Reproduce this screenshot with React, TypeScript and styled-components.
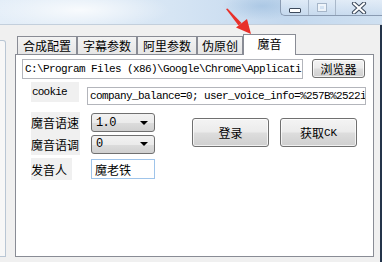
import React from "react";
import styled, { createGlobalStyle } from "styled-components";

const GlobalStyle = createGlobalStyle`
  html, body {
    margin: 0;
    padding: 0;
    background: #f0f0f0;
  }
`;

const CJK = `"Noto Sans CJK SC", "Liberation Sans", sans-serif`;
const MONO = `"Liberation Mono", "Noto Sans CJK SC", monospace`;

const Root = styled.div`
  width: 382px;
  height: 262px;
  position: relative;
  overflow: hidden;
  display: flex;
  flex-direction: column;
  background: #f0f0f0;
  font-family: ${CJK};
  font-size: 12px;
  color: #000;
`;

const TitleBar = styled.div`
  height: 24px;
  display: flex;
  justify-content: flex-end;
  align-items: flex-start;
  background:
    radial-gradient(ellipse 40px 14px at 262px 6px, rgba(150, 185, 220, 0.55), rgba(150, 185, 220, 0)),
    radial-gradient(ellipse 90px 20px at 80px 10px, rgba(255, 255, 255, 0.8), rgba(255, 255, 255, 0)),
    linear-gradient(to right, #e4eef8 0%, #d6e5f4 45%, #c3d8ee 75%, #cfe0f1 100%);
`;

const Controls = styled.div`
  display: flex;
  height: 15px;
  border-left: 1px solid #8a9bb2;
  border-bottom: 1px solid #8a9bb2;
  border-bottom-left-radius: 5px;
  background: linear-gradient(to bottom, rgba(235, 242, 250, 0.7), rgba(200, 218, 238, 0.6));
`;

const CtrlButton = styled.div<{ $w: number; $last?: boolean }>`
  width: ${({ $w }) => $w}px;
  display: flex;
  align-items: center;
  justify-content: center;
  border-right: ${({ $last }) => ($last ? "none" : "1px solid #a9b8ca")};
`;

const MinIcon = styled.div`
  width: 10px;
  height: 3px;
  margin-top: 5px;
  background: #fff;
  border: 1px solid #3d4a5c;
  border-radius: 1px;
`;

const MaxIcon = styled.div`
  width: 8px;
  height: 7px;
  border: 1px solid #a6b6c9;
  box-shadow: inset 0 0 0 2px rgba(255, 255, 255, 0.6);
`;

const Body = styled.div`
  flex: 1;
  display: flex;
  border-top: 1px solid #c3cfdc;
`;

const LeftStub = styled.div`
  width: 5px;
  margin-top: 15px;
  margin-bottom: 5px;
  background: #f7f7f7;
  border-right: 1px solid #b9c6d4;
  border-bottom: 1px solid #b9c6d4;
  border-top: 1px solid #b9c6d4;
  border-top-right-radius: 3px;
`;

const TabArea = styled.div`
  margin-left: 9px;
  margin-top: 9px;
  width: 359px;
  height: 223px;
  display: flex;
  flex-direction: column;
`;

const TabRow = styled.div`
  display: flex;
  align-items: flex-start;
  height: 21px;
  margin-bottom: -1px;
  padding-left: 2px;
  position: relative;
  z-index: 1;
`;

const Tab = styled.div<{ $w: number; $active?: boolean }>`
  box-sizing: border-box;
  width: ${({ $w }) => $w}px;
  height: ${({ $active }) => ($active ? 21 : 19)}px;
  margin-top: ${({ $active }) => ($active ? 0 : 2)}px;
  border: 1px solid #898c95;
  border-bottom: ${({ $active }) => ($active ? "none" : "1px solid #898c95")};
  background: ${({ $active }) =>
    $active ? "#fff" : "linear-gradient(to bottom, #f3f3f3, #e6e6e6)"};
  display: flex;
  justify-content: center;
  align-items: ${({ $active }) => ($active ? "flex-start" : "center")};
  padding-top: ${({ $active }) => ($active ? 2 : 0)}px;
  line-height: 14px;
  font-size: 12px;
  white-space: nowrap;
`;

const Panel = styled.div`
  flex: 1;
  background: #fff;
  border: 1px solid #898c95;
  padding: 4px 6px;
  display: flex;
  flex-direction: column;
`;

const PathRow = styled.div`
  display: flex;
  align-items: flex-start;
`;

const TextBox = styled.div<{ $w: number; $h: number; $focus?: boolean; $mono?: boolean }>`
  box-sizing: border-box;
  width: ${({ $w }) => $w}px;
  height: ${({ $h }) => $h}px;
  border: 1px solid ${({ $focus }) => ($focus ? "#9fc4ea" : "#b3b5bb")};
  background: #fff;
  padding-left: ${({ $mono }) => ($mono ? 2 : 3)}px;
  display: flex;
  align-items: center;
  white-space: nowrap;
  overflow: hidden;
  font-family: ${({ $mono }) => ($mono ? MONO : CJK)};
  font-size: ${({ $mono }) => ($mono ? 11 : 12)}px;
  letter-spacing: ${({ $mono }) => ($mono ? "-0.6px" : "0")};
`;

const WinButton = styled.div<{ $w: number; $h: number }>`
  box-sizing: border-box;
  width: ${({ $w }) => $w}px;
  height: ${({ $h }) => $h}px;
  border: 1px solid #707070;
  border-radius: 3px;
  background: linear-gradient(to bottom, #f4f4f4 0%, #ebebeb 48%, #dddddd 52%, #cfcfcf 100%);
  box-shadow: inset 0 0 0 1px rgba(255, 255, 255, 0.7);
  display: flex;
  align-items: center;
  justify-content: center;
  font-size: 12px;
  white-space: nowrap;
`;

const BrowseButton = styled(WinButton)`
  margin-left: 9px;
`;

const Form = styled.div`
  margin-top: 3px;
  padding-left: 9px;
  display: flex;
  flex-direction: column;
`;

const CookieRow = styled.div`
  display: flex;
  align-items: flex-start;
`;

const CookieLabel = styled.div`
  width: 48px;
  height: 20px;
  background: #f0f0f0;
  display: flex;
  align-items: center;
  padding-left: 1px;
  box-sizing: border-box;
  font-family: ${MONO};
  font-size: 11px;
  letter-spacing: -0.8px;
`;

const CookieBox = styled(TextBox)`
  margin-left: 8px;
  margin-top: 5px;
`;

const Lower = styled.div`
  display: flex;
  margin-top: 7px;
`;

const FieldCol = styled.div`
  display: flex;
  flex-direction: column;
`;

const FieldRow = styled.div<{ $h: number; $gap?: number }>`
  display: grid;
  grid-template-columns: 60px auto;
  align-items: center;
  height: ${({ $h }) => $h}px;
  margin-top: ${({ $gap }) => $gap ?? 0}px;
`;

const FieldLabel = styled.div<{ $w: number }>`
  width: ${({ $w }) => $w}px;
  height: 100%;
  background: #f0f0f0;
  display: flex;
  align-items: center;
  font-size: 12px;
  white-space: nowrap;
`;

const Combo = styled.div`
  box-sizing: border-box;
  width: 64px;
  height: 19px;
  border: 1px solid #707070;
  border-radius: 3px;
  background: linear-gradient(to bottom, #f2f2f2 0%, #ebebeb 50%, #dcdcdc 51%, #d0d0d0 100%);
  display: flex;
  align-items: center;
  justify-content: space-between;
  padding: 0 6px 0 4px;
  font-family: ${MONO};
  font-size: 12px;
  letter-spacing: -0.6px;
`;

const Caret = styled.span`
  width: 0;
  height: 0;
  border-left: 4px solid transparent;
  border-right: 4px solid transparent;
  border-top: 4px solid #000;
`;

const ButtonCol = styled.div`
  display: flex;
  gap: 11px;
  margin-left: 37px;
  margin-top: 6px;
`;

const MonoSpan = styled.span`
  font-family: ${MONO};
  font-size: 11px;
`;

const RightEdge = styled.div`
  margin-left: auto;
  width: 2px;
  background: #24344a;
`;

const Arrow = styled.svg`
  position: absolute;
  left: 0;
  top: 0;
  pointer-events: none;
`;

export default function App() {
  return (
    <Root>
      <GlobalStyle />
      <TitleBar>
        <Controls>
          <CtrlButton $w={27}>
            <MinIcon />
          </CtrlButton>
          <CtrlButton $w={26}>
            <MaxIcon />
          </CtrlButton>
          <CtrlButton $w={46} $last>
            <svg width="16" height="12" viewBox="0 0 16 12">
              <path
                d="M3 1.5 L13 10.5 M13 1.5 L3 10.5"
                stroke="#3d4a5c"
                strokeWidth="4.2"
                strokeLinecap="round"
              />
              <path
                d="M3 1.5 L13 10.5 M13 1.5 L3 10.5"
                stroke="#fff"
                strokeWidth="2.2"
                strokeLinecap="round"
              />
            </svg>
          </CtrlButton>
        </Controls>
      </TitleBar>
      <Body>
        <LeftStub />
        <TabArea>
          <TabRow>
            <Tab $w={60}>合成配置</Tab>
            <Tab $w={60}>字幕参数</Tab>
            <Tab $w={60}>阿里参数</Tab>
            <Tab $w={46}>伪原创</Tab>
            <Tab $w={53} $active>
              魔音
            </Tab>
          </TabRow>
          <Panel>
            <PathRow>
              <TextBox $w={281} $h={20} $mono>
                C:\Program Files (x86)\Google\Chrome\Applicati
              </TextBox>
              <BrowseButton $w={53} $h={19}>
                浏览器
              </BrowseButton>
            </PathRow>
            <Form>
              <CookieRow>
                <CookieLabel>cookie</CookieLabel>
                <CookieBox $w={279} $h={18} $mono>
                  company_balance=0; user_voice_info=%257B%2522i
                </CookieBox>
              </CookieRow>
              <Lower>
                <FieldCol>
                  <FieldRow $h={21}>
                    <FieldLabel $w={49}>魔音语速</FieldLabel>
                    <Combo>
                      1.0
                      <Caret />
                    </Combo>
                  </FieldRow>
                  <FieldRow $h={22}>
                    <FieldLabel $w={49}>魔音语调</FieldLabel>
                    <Combo>
                      0
                      <Caret />
                    </Combo>
                  </FieldRow>
                  <FieldRow $h={22} $gap={3}>
                    <FieldLabel $w={41}>发音人</FieldLabel>
                    <TextBox $w={64} $h={20} $focus>
                      魔老铁
                    </TextBox>
                  </FieldRow>
                </FieldCol>
                <ButtonCol>
                  <WinButton $w={77} $h={29}>
                    登录
                  </WinButton>
                  <WinButton $w={77} $h={29}>
                    获取<MonoSpan>CK</MonoSpan>
                  </WinButton>
                </ButtonCol>
              </Lower>
            </Form>
          </Panel>
        </TabArea>
        <RightEdge />
      </Body>
      <Arrow width="382" height="262" viewBox="0 0 382 262">
        <polygon points="226,9 227.5,8.5 241.5,23 238.5,25.5" fill="#e8302a" />
        <polygon points="236,27.5 247,19 251,34" fill="#e8302a" />
      </Arrow>
    </Root>
  );
}
